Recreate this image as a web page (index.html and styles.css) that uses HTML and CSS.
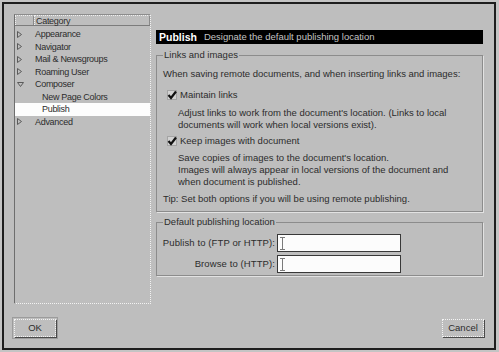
FILE: index.html
```html
<!DOCTYPE html>
<html>
	<head>
		<meta charset="UTF-8">
		<title>Preferences</title>
		<link rel="stylesheet" href="styles.css">
	</head>
	<body>
		<div class="window">
			<div class="main">
				<div class="tree">
					<div class="tree-head">
						<span class="head-cell head-icon"></span>
						<span class="head-cell head-title">Category</span>
					</div>
					<ul class="tree-list">
						<li><span class="twisty"><svg width="5" height="7" viewBox="0 0 5 7"><path d="M0.5 0.5L4.5 3.5L0.5 6.5Z" fill="none" stroke="#5a5a5a"/></svg></span>Appearance</li>
						<li><span class="twisty"><svg width="5" height="7" viewBox="0 0 5 7"><path d="M0.5 0.5L4.5 3.5L0.5 6.5Z" fill="none" stroke="#5a5a5a"/></svg></span>Navigator</li>
						<li><span class="twisty"><svg width="5" height="7" viewBox="0 0 5 7"><path d="M0.5 0.5L4.5 3.5L0.5 6.5Z" fill="none" stroke="#5a5a5a"/></svg></span>Mail &amp; Newsgroups</li>
						<li><span class="twisty"><svg width="5" height="7" viewBox="0 0 5 7"><path d="M0.5 0.5L4.5 3.5L0.5 6.5Z" fill="none" stroke="#5a5a5a"/></svg></span>Roaming User</li>
						<li><span class="twisty"><svg width="7" height="5" viewBox="0 0 7 5"><path d="M0.5 0.5L6.5 0.5L3.5 4.5Z" fill="none" stroke="#5a5a5a"/></svg></span>Composer</li>
						<li class="child">New Page Colors</li>
						<li class="child selected">Publish</li>
						<li><span class="twisty"><svg width="5" height="7" viewBox="0 0 5 7"><path d="M0.5 0.5L4.5 3.5L0.5 6.5Z" fill="none" stroke="#5a5a5a"/></svg></span>Advanced</li>
					</ul>
				</div>

				<div class="panel">
					<div class="title-bar">
						<b>Publish</b>
						<span>Designate the default publishing location</span>
					</div>

					<fieldset class="group">
						<legend>Links and images</legend>
						<p class="intro">When saving remote documents, and when inserting links and images:</p>
						<label class="check">
							<svg width="10" height="10" viewBox="0 0 10 10"><rect x="0.5" y="0.5" width="9" height="9" fill="#d2d2d2" stroke="#a4a4a4"/><path d="M1.5 5L4 8L9 1.5" fill="none" stroke="#111" stroke-width="2.2"/></svg>
							Maintain links
						</label>
						<p class="note">Adjust links to work from the document's location. (Links to local<br>documents will work when local versions exist).</p>
						<label class="check check-second">
							<svg width="10" height="10" viewBox="0 0 10 10"><rect x="0.5" y="0.5" width="9" height="9" fill="#d2d2d2" stroke="#a4a4a4"/><path d="M1.5 5L4 8L9 1.5" fill="none" stroke="#111" stroke-width="2.2"/></svg>
							Keep images with document
						</label>
						<p class="note note-second">Save copies of images to the document's location.<br>Images will always appear in local versions of the document and<br>when document is published.</p>
						<p class="tip">Tip: Set both options if you will be using remote publishing.</p>
					</fieldset>

					<fieldset class="group group-location">
						<legend>Default publishing location</legend>
						<div class="fields">
							<span class="field-label">Publish to (FTP or HTTP):</span>
							<div class="input"><svg width="5" height="13" viewBox="0 0 5 13"><path d="M0 0.5H5M0 12.5H5M2.5 0.5V12.5" stroke="#7a7a7a"/></svg></div>
							<span class="field-label">Browse to (HTTP):</span>
							<div class="input"><svg width="5" height="13" viewBox="0 0 5 13"><path d="M0 0.5H5M0 12.5H5M2.5 0.5V12.5" stroke="#7a7a7a"/></svg></div>
						</div>
					</fieldset>
				</div>
			</div>

			<div class="buttons">
				<button class="btn btn-default">OK</button>
				<button class="btn">Cancel</button>
			</div>
		</div>
	</body>
</html>
```

FILE: styles.css
```css
* {
	margin: 0;
	padding: 0;
	box-sizing: border-box;
}

body {
	background-color: #c4c4c4;
	font: 9.5px/12px "Liberation Sans", Arial, sans-serif;
	color: #2c2c2c;
}

.window {
	margin: 2px;
	width: 494px;
	height: 348px;
	border: 2px solid #1e1e1e;
	background-color: #bebebe;
	padding: 10px;
	display: flex;
	flex-direction: column;
}

.main {
	display: flex;
	gap: 5px;
	height: 290px;
}

/* category tree */
.tree {
	width: 137px;
	flex: none;
	font-size: 9px;
	letter-spacing: -0.3px;
	border-left: 1px solid #6e6e6e;
	border-top: 1px solid #8c8c8c;
	border-right: 1px dotted #f2f2f2;
	border-bottom: 1px dotted #f2f2f2;
}

.tree-head {
	display: flex;
	height: 11px;
	border-bottom: 1px solid #7c7c7c;
}

.head-cell {
	border-top: 1px dotted #f0f0f0;
	border-left: 1px dotted #f0f0f0;
	border-right: 1px solid #8a8a8a;
	line-height: 10px;
}

.head-icon {
	width: 19px;
}

.head-title {
	flex: 1;
	padding-left: 1px;
}

.tree-list {
	list-style: none;
	padding-top: 2px;
}

.tree-list li {
	height: 12.5px;
	line-height: 12px;
	display: flex;
	align-items: center;
}

.twisty {
	width: 20px;
	padding-left: 2px;
	display: flex;
	align-items: center;
}

.tree-list .child {
	padding-left: 27px;
}

.tree-list .selected {
	background-color: #fdfdfd;
}

/* right panel */
.panel {
	width: 327px;
	padding-top: 16px;
}

.title-bar {
	height: 14px;
	background-color: #000;
	display: flex;
	align-items: center;
	padding-left: 3px;
}

.title-bar b {
	color: #fff;
	font-size: 10.5px;
}

.title-bar span {
	color: #c4c4c4;
	margin-left: 7px;
}

.group {
	margin-top: 5px;
	border: 1px solid #8c8c8c;
	box-shadow: 1px 1px 0 #e2e2e2;
	padding: 0 6px 6px 6px;
}

.group legend {
	padding: 0 1px;
	line-height: 12px;
}

.intro {
	margin-top: 7px;
}

.check {
	margin-top: 9px;
	margin-left: 4px;
	height: 12px;
	display: flex;
	align-items: center;
	gap: 3px;
}

.check-second {
	margin-top: 4px;
}

.note {
	margin-top: 6px;
	padding-left: 15px;
}

.note-second {
	margin-top: 5px;
}

.tip {
	margin-top: 5px;
}

.group-location {
	margin-top: 4px;
	padding-bottom: 2px;
}

.fields {
	margin-top: 6px;
	display: grid;
	grid-template-columns: 112px 124px;
	column-gap: 2px;
	row-gap: 3px;
	align-items: center;
}

.field-label {
	justify-self: end;
	white-space: nowrap;
	letter-spacing: 0.1px;
}

.input {
	height: 18px;
	border: 1px solid #383838;
	background-color: #fcfcfc;
	padding-left: 2px;
	display: flex;
	align-items: center;
}

/* buttons */
.buttons {
	margin-top: 15px;
	display: flex;
	justify-content: space-between;
}

.btn {
	width: 42px;
	height: 18px;
	font: 9.5px/12px "Liberation Sans", Arial, sans-serif;
	color: #2c2c2c;
	background-color: #bebebe;
	border: 1px dotted #f4f4f4;
	box-shadow: 1px 1px 0 #4a4a4a;
}

.btn-default {
	outline: 1px solid #9c9c9c;
	outline-offset: 1px;
}
```
